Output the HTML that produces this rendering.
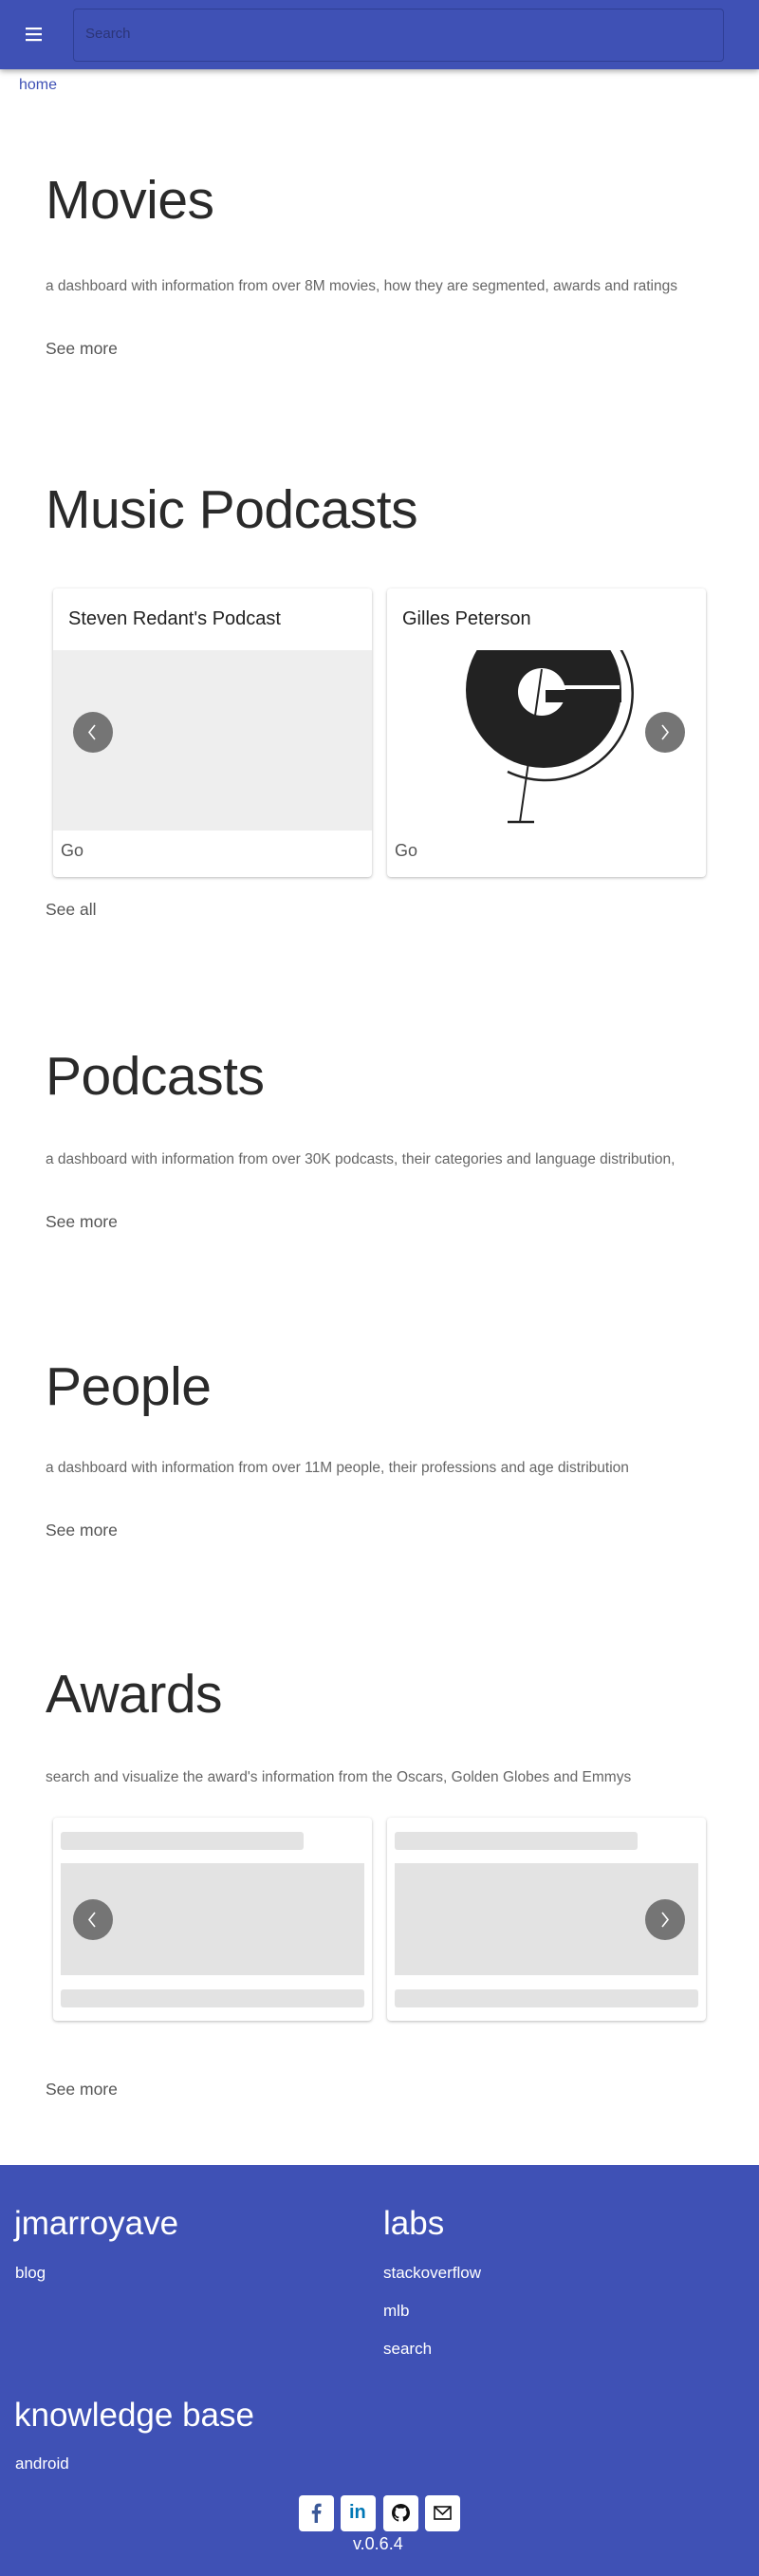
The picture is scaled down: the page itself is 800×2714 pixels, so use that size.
<!DOCTYPE html>
<html><head><meta charset="utf-8"><style>
*{margin:0;padding:0;box-sizing:border-box}
body{width:800px;height:2714px;position:relative;background:#fff;font-family:"Liberation Sans",Arial,sans-serif;overflow:hidden;color:#222}
.a{position:absolute;white-space:nowrap}
.hdr{position:absolute;left:0;top:0;width:800px;height:73px;background:#3f51b5;box-shadow:0 2px 6px rgba(0,0,0,.35)}
.srch{position:absolute;left:77px;top:9px;width:686px;height:56px;border:1px solid #2f3f95;border-radius:4px;color:#2c3577;font-size:15px;padding:17px 0 0 12px}
.h1{font-size:57px;font-weight:300;color:#2a2a2a;left:48px;letter-spacing:-.5px}
.d{font-size:15.5px;color:#666;left:48px}
.sm{font-size:17.5px;color:#555;left:48px}
.card{position:absolute;background:#fff;border-radius:4px;box-shadow:0 1px 3px rgba(0,0,0,.28)}
.arr{position:absolute;width:42px;height:43px;border-radius:50%;background:#757575}
.arr svg{position:absolute;left:12px;top:12px}
.sk{position:absolute;background:#e3e3e3;border-radius:3px}
.ft{position:absolute;left:0;top:2281px;width:800px;height:433px;background:#3f51b5;color:#fff}
.ico{position:absolute;top:2629px;width:37px;height:38px;background:#fff;border-radius:4px}
</style></head><body>
<div class="hdr">
<svg style="position:absolute;left:26px;top:28px" width="20" height="16" viewBox="0 0 20 16"><rect x="1" y="1" width="17" height="2.2" fill="#fff"/><rect x="1" y="7" width="17" height="2.2" fill="#fff"/><rect x="1" y="13" width="17" height="2.2" fill="#fff"/></svg>
<div class="srch">Search</div>
</div>
<div class="a" style="left:20px;top:81px;font-size:16px;color:#3f51b5">home</div>

<div class="a h1" style="top:178px">Movies</div>
<div class="a d" style="top:293px">a dashboard with information from over 8M movies, how they are segmented, awards and ratings</div>
<div class="a sm" style="top:357px">See more</div>

<div class="a h1" style="top:504px">Music Podcasts</div>
<div class="card" style="left:56px;top:620px;width:336px;height:304px">
<div class="a" style="left:16px;top:21px;font-size:20px;color:#222">Steven Redant's Podcast</div>
<div style="position:absolute;left:0;top:65px;width:336px;height:190px;background:#eee"></div>
<div class="a" style="left:8px;top:266px;font-size:18px;color:#555">Go</div>
</div>
<div class="card" style="left:408px;top:620px;width:336px;height:304px;overflow:hidden">
<div class="a" style="left:16px;top:21px;font-size:20px;color:#222">Gilles Peterson</div>
<div class="a" style="left:8px;top:266px;font-size:18px;color:#555">Go</div>
</div>
<svg style="position:absolute;left:408px;top:685px" width="336" height="190" viewBox="408 685 336 190">
<circle cx="573" cy="727" r="82" fill="#222"/>
<path d="M575 638 A92 92 0 1 1 535 813" fill="none" stroke="#222" stroke-width="2.5"/>
<circle cx="571" cy="729" r="25" fill="#fff"/>
<rect x="573" y="722" width="80" height="4" fill="#fff"/>
<rect x="575" y="727" width="80" height="13" fill="#222"/>
<line x1="571" y1="705" x2="548" y2="866" stroke="#222" stroke-width="2"/>
<line x1="535" y1="866" x2="563" y2="866" stroke="#222" stroke-width="2.5"/>
</svg>
<div class="arr" style="left:77px;top:750px"><svg width="18" height="19" viewBox="0 0 18 19"><path d="M11 2 L5 9.5 L11 17" fill="none" stroke="#fff" stroke-width="1.6"/></svg></div>
<div class="arr" style="left:680px;top:750px"><svg width="18" height="19" viewBox="0 0 18 19"><path d="M6 2 L12 9.5 L6 17" fill="none" stroke="#fff" stroke-width="1.6"/></svg></div>
<div class="a sm" style="top:948px">See all</div>

<div class="a h1" style="top:1101px">Podcasts</div>
<div class="a d" style="top:1213px">a dashboard with information from over 30K podcasts, their categories and language distribution,</div>
<div class="a sm" style="top:1277px">See more</div>

<div class="a h1" style="top:1428px">People</div>
<div class="a d" style="top:1538px">a dashboard with information from over 11M people, their professions and age distribution</div>
<div class="a sm" style="top:1602px">See more</div>

<div class="a h1" style="top:1752px">Awards</div>
<div class="a d" style="top:1864px">search and visualize the award's information from the Oscars, Golden Globes and Emmys</div>
<div class="card" style="left:56px;top:1915px;width:336px;height:214px"></div>
<div class="card" style="left:408px;top:1915px;width:336px;height:214px"></div>
<div class="sk" style="left:64px;top:1930px;width:256px;height:19px"></div>
<div class="sk" style="left:64px;top:1963px;width:320px;height:118px;border-radius:0"></div>
<div class="sk" style="left:64px;top:2096px;width:320px;height:19px"></div>
<div class="sk" style="left:416px;top:1930px;width:256px;height:19px"></div>
<div class="sk" style="left:416px;top:1963px;width:320px;height:118px;border-radius:0"></div>
<div class="sk" style="left:416px;top:2096px;width:320px;height:19px"></div>
<div class="arr" style="left:77px;top:2001px"><svg width="18" height="19" viewBox="0 0 18 19"><path d="M11 2 L5 9.5 L11 17" fill="none" stroke="#fff" stroke-width="1.6"/></svg></div>
<div class="arr" style="left:680px;top:2001px"><svg width="18" height="19" viewBox="0 0 18 19"><path d="M6 2 L12 9.5 L6 17" fill="none" stroke="#fff" stroke-width="1.6"/></svg></div>
<div class="a sm" style="top:2191px">See more</div>

<div class="ft"></div>
<div class="a" style="left:15px;top:2323px;font-size:35px;font-weight:300;color:#fff">jmarroyave</div>
<div class="a" style="left:404px;top:2323px;font-size:35px;font-weight:300;color:#fff">labs</div>
<div class="a" style="left:16px;top:2385px;font-size:17px;color:#fff">blog</div>
<div class="a" style="left:404px;top:2385px;font-size:17px;color:#fff">stackoverflow</div>
<div class="a" style="left:404px;top:2425px;font-size:17px;color:#fff">mlb</div>
<div class="a" style="left:404px;top:2465px;font-size:17px;color:#fff">search</div>
<div class="a" style="left:15px;top:2525px;font-size:35px;font-weight:300;color:#fff">knowledge base</div>
<div class="a" style="left:16px;top:2586px;font-size:17px;color:#fff">android</div>
<div class="ico" style="left:315px"><svg width="37" height="38" viewBox="0 0 37 38"><path d="M20 29 V19.5 H23 L23.5 16 H20 V13.8 C20 12.8 20.3 12 21.8 12 H23.6 V8.8 C23.2 8.8 22.2 8.6 21 8.6 C18.4 8.6 16.6 10.2 16.6 13.2 V16 H13.8 V19.5 H16.6 V29 Z" fill="#3b5998"/></svg></div>
<div class="ico" style="left:359px"><div class="a" style="left:9px;top:7px;font-size:20px;font-weight:bold;color:#0077b5">in</div></div>
<div class="ico" style="left:404px"><svg width="37" height="38" viewBox="0 0 16 16" style="position:absolute;left:9px;top:9px;width:19px;height:19px"><path fill="#111" d="M8 0C3.58 0 0 3.58 0 8c0 3.540 2.29 6.53 5.47 7.59.4.07.55-.17.55-.38 0-.19-.01-.82-.01-1.49-2.01.37-2.530-.49-2.69-.94-.09-.23-.48-.94-.82-1.13-.28-.15-.68-.52-.01-.53.63-.01 1.08.58 1.23.82.72 1.21 1.87.87 2.33.66.07-.52.28-.87.51-1.070-1.78-.2-3.64-.89-3.64-3.95 0-.87.31-1.59.82-2.15-.08-.2-.36-1.02.08-2.12 0 0 .67-.21 2.2.82.64-.18 1.32-.27 2-.27.68 0 1.36.09 2 .27 1.53-1.04 2.2-.82 2.2-.82.44 1.1.16 1.92.08 2.12.51.56.82 1.27.82 2.15 0 3.07-1.87 3.75-3.65 3.95.29.25.54.73.54 1.48 0 1.07-.01 1.93-.01 2.2 0 .21.15.46.55.38A8.013 8.013 0 0016 8c0-4.42-3.58-8-8-8z"/></svg></div>
<div class="ico" style="left:448px"><svg width="37" height="38" viewBox="0 0 37 38"><rect x="10" y="12" width="17" height="13" fill="none" stroke="#111" stroke-width="1.6"/><path d="M10 12 L18.5 20 L27 12" fill="none" stroke="#111" stroke-width="1.6"/></svg></div>
<div class="a" style="left:372px;top:2670px;font-size:18px;color:#fff">v.0.6.4</div>
</body></html>
